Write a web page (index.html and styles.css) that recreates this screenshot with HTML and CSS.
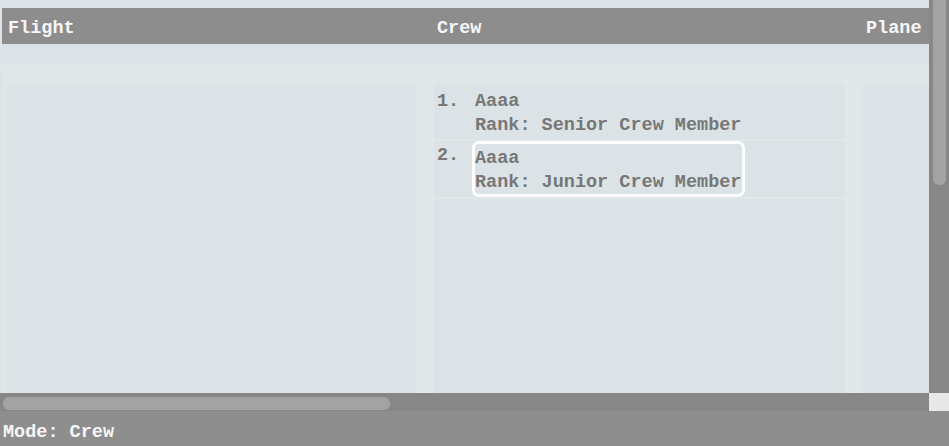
FILE: index.html
```html
<!DOCTYPE html>
<html>
<head>
<meta charset="utf-8">
<link rel="stylesheet" href="styles.css">
</head>
<body>
<div class="app">
  <div class="main-row">
    <div class="viewport">
      <div class="canvas">
        <div class="header-row">
          <div class="hcell">Flight</div>
          <div class="hcell">Crew</div>
          <div class="hcell">Plane</div>
          <div class="hcell"></div>
          <div class="hcell"></div>
        </div>
        <div class="band"></div>
        <div class="columns">
          <section class="col">
            <div class="divider"></div>
            <div class="panel"><div class="panel-top"></div><ol class="list"></ol></div>
            <div class="gutter"></div>
          </section>
          <section class="col">
            <div class="divider"></div>
            <div class="panel">
              <div class="panel-top"></div>
              <ol class="list">
                <li class="item">
                  <span class="marker">1.</span>
                  <div class="card">
                    <div class="line">Aaaa</div>
                    <div class="line">Rank: Senior Crew Member</div>
                  </div>
                </li>
                <li class="item selected">
                  <span class="marker">2.</span>
                  <div class="card">
                    <div class="line">Aaaa</div>
                    <div class="line">Rank: Junior Crew Member</div>
                  </div>
                </li>
              </ol>
            </div>
            <div class="gutter"></div>
          </section>
          <section class="col">
            <div class="divider"></div>
            <div class="panel"><div class="panel-top"></div><ol class="list"></ol></div>
            <div class="gutter"></div>
          </section>
          <section class="col">
            <div class="divider"></div>
            <div class="panel"><div class="panel-top"></div><ol class="list"></ol></div>
            <div class="gutter"></div>
          </section>
        </div>
      </div>
    </div>
    <div class="vscroll"><div class="vthumb"></div></div>
  </div>
  <div class="hscroll-row">
    <div class="hscroll"><div class="hthumb"></div></div>
    <div class="corner"></div>
  </div>
  <div class="status">Mode: Crew</div>
</div>
</body>
</html>
```
FILE: styles.css
```css
html, body {
  margin: 0;
  padding: 0;
}
body {
  background: #dbe3e6;
  font-family: "Liberation Mono", "Courier New", monospace;
  font-weight: bold;
  font-size: 18.5px;
  overflow: hidden;
}
.app {
  width: 949px;
  height: 446px;
  display: flex;
  flex-direction: column;
}
.main-row {
  display: flex;
  height: 393px;
  flex: none;
}
.viewport {
  width: 929px;
  height: 393px;
  overflow: hidden;
  background: #dbe3e6;
}
.vscroll {
  width: 20px;
  height: 393px;
  background: #878787;
  box-sizing: border-box;
  padding-left: 4px;
  padding-right: 3px;
}
.vthumb {
  height: 185px;
  background: #a3a3a3;
  border-radius: 0 0 6px 6px;
}
.hscroll-row {
  display: flex;
  height: 18px;
  flex: none;
}
.hscroll {
  width: 929px;
  background: #878787;
  box-sizing: border-box;
  padding: 4px 0 1px 3px;
}
.hthumb {
  width: 387px;
  height: 13px;
  background: #a3a3a3;
  border-radius: 6px;
}
.corner {
  width: 20px;
  background: #e8e8e8;
}
.canvas {
  width: 2213px;
  height: 393px;
  padding-top: 8px;
  box-sizing: border-box;
  display: flex;
  flex-direction: column;
}
.header-row {
  margin-left: 2px;
  height: 36px;
  background: #8d8d8d;
  display: flex;
  flex: none;
}
.hcell {
  width: 429px;
  flex: none;
  box-sizing: border-box;
  padding-left: 6px;
  padding-top: 6px;
  line-height: 30px;
  color: #f7f7f7;
}
.band {
  height: 6px;
  margin-top: 20px;
  background: #e0e7e9;
  flex: none;
}
.columns {
  display: flex;
  margin-left: 2px;
  flex: 1;
}
.col {
  width: 429px;
  flex: none;
  display: flex;
}
.divider {
  width: 3px;
  background: #dfe6e9;
  border-right: 1px solid #e3eaec;
  box-sizing: border-box;
}
.panel {
  width: 411px;
  display: flex;
  flex-direction: column;
}
.panel-top {
  height: 15px;
  background: #e0e7e9;
  flex: none;
}
.gutter {
  width: 15px;
  background: #e1e8ea;
}
.list {
  margin: 0;
  padding: 0;
  list-style: none;
  color: #777777;
}
.item {
  display: flex;
  border-bottom: 2px solid #e1e8ea;
}
.marker {
  width: 38px;
  flex: none;
  box-sizing: border-box;
  padding-left: 3px;
  padding-top: 7px;
  line-height: 20px;
}
.selected .marker {
  padding-top: 5px;
}
.card {
  border: 3px solid transparent;
  border-radius: 7px;
  padding-right: 1px;
}
.selected .card {
  border-color: #ffffff;
  padding-top: 1px;
  padding-bottom: 1px;
}
.line {
  padding-top: 4px;
  line-height: 20px;
  white-space: nowrap;
}
.status {
  height: 35px;
  box-sizing: border-box;
  background: #8e8e8e;
  color: #f7f7f7;
  padding-top: 8px;
  line-height: 27px;
  padding-left: 3px;
}
```
